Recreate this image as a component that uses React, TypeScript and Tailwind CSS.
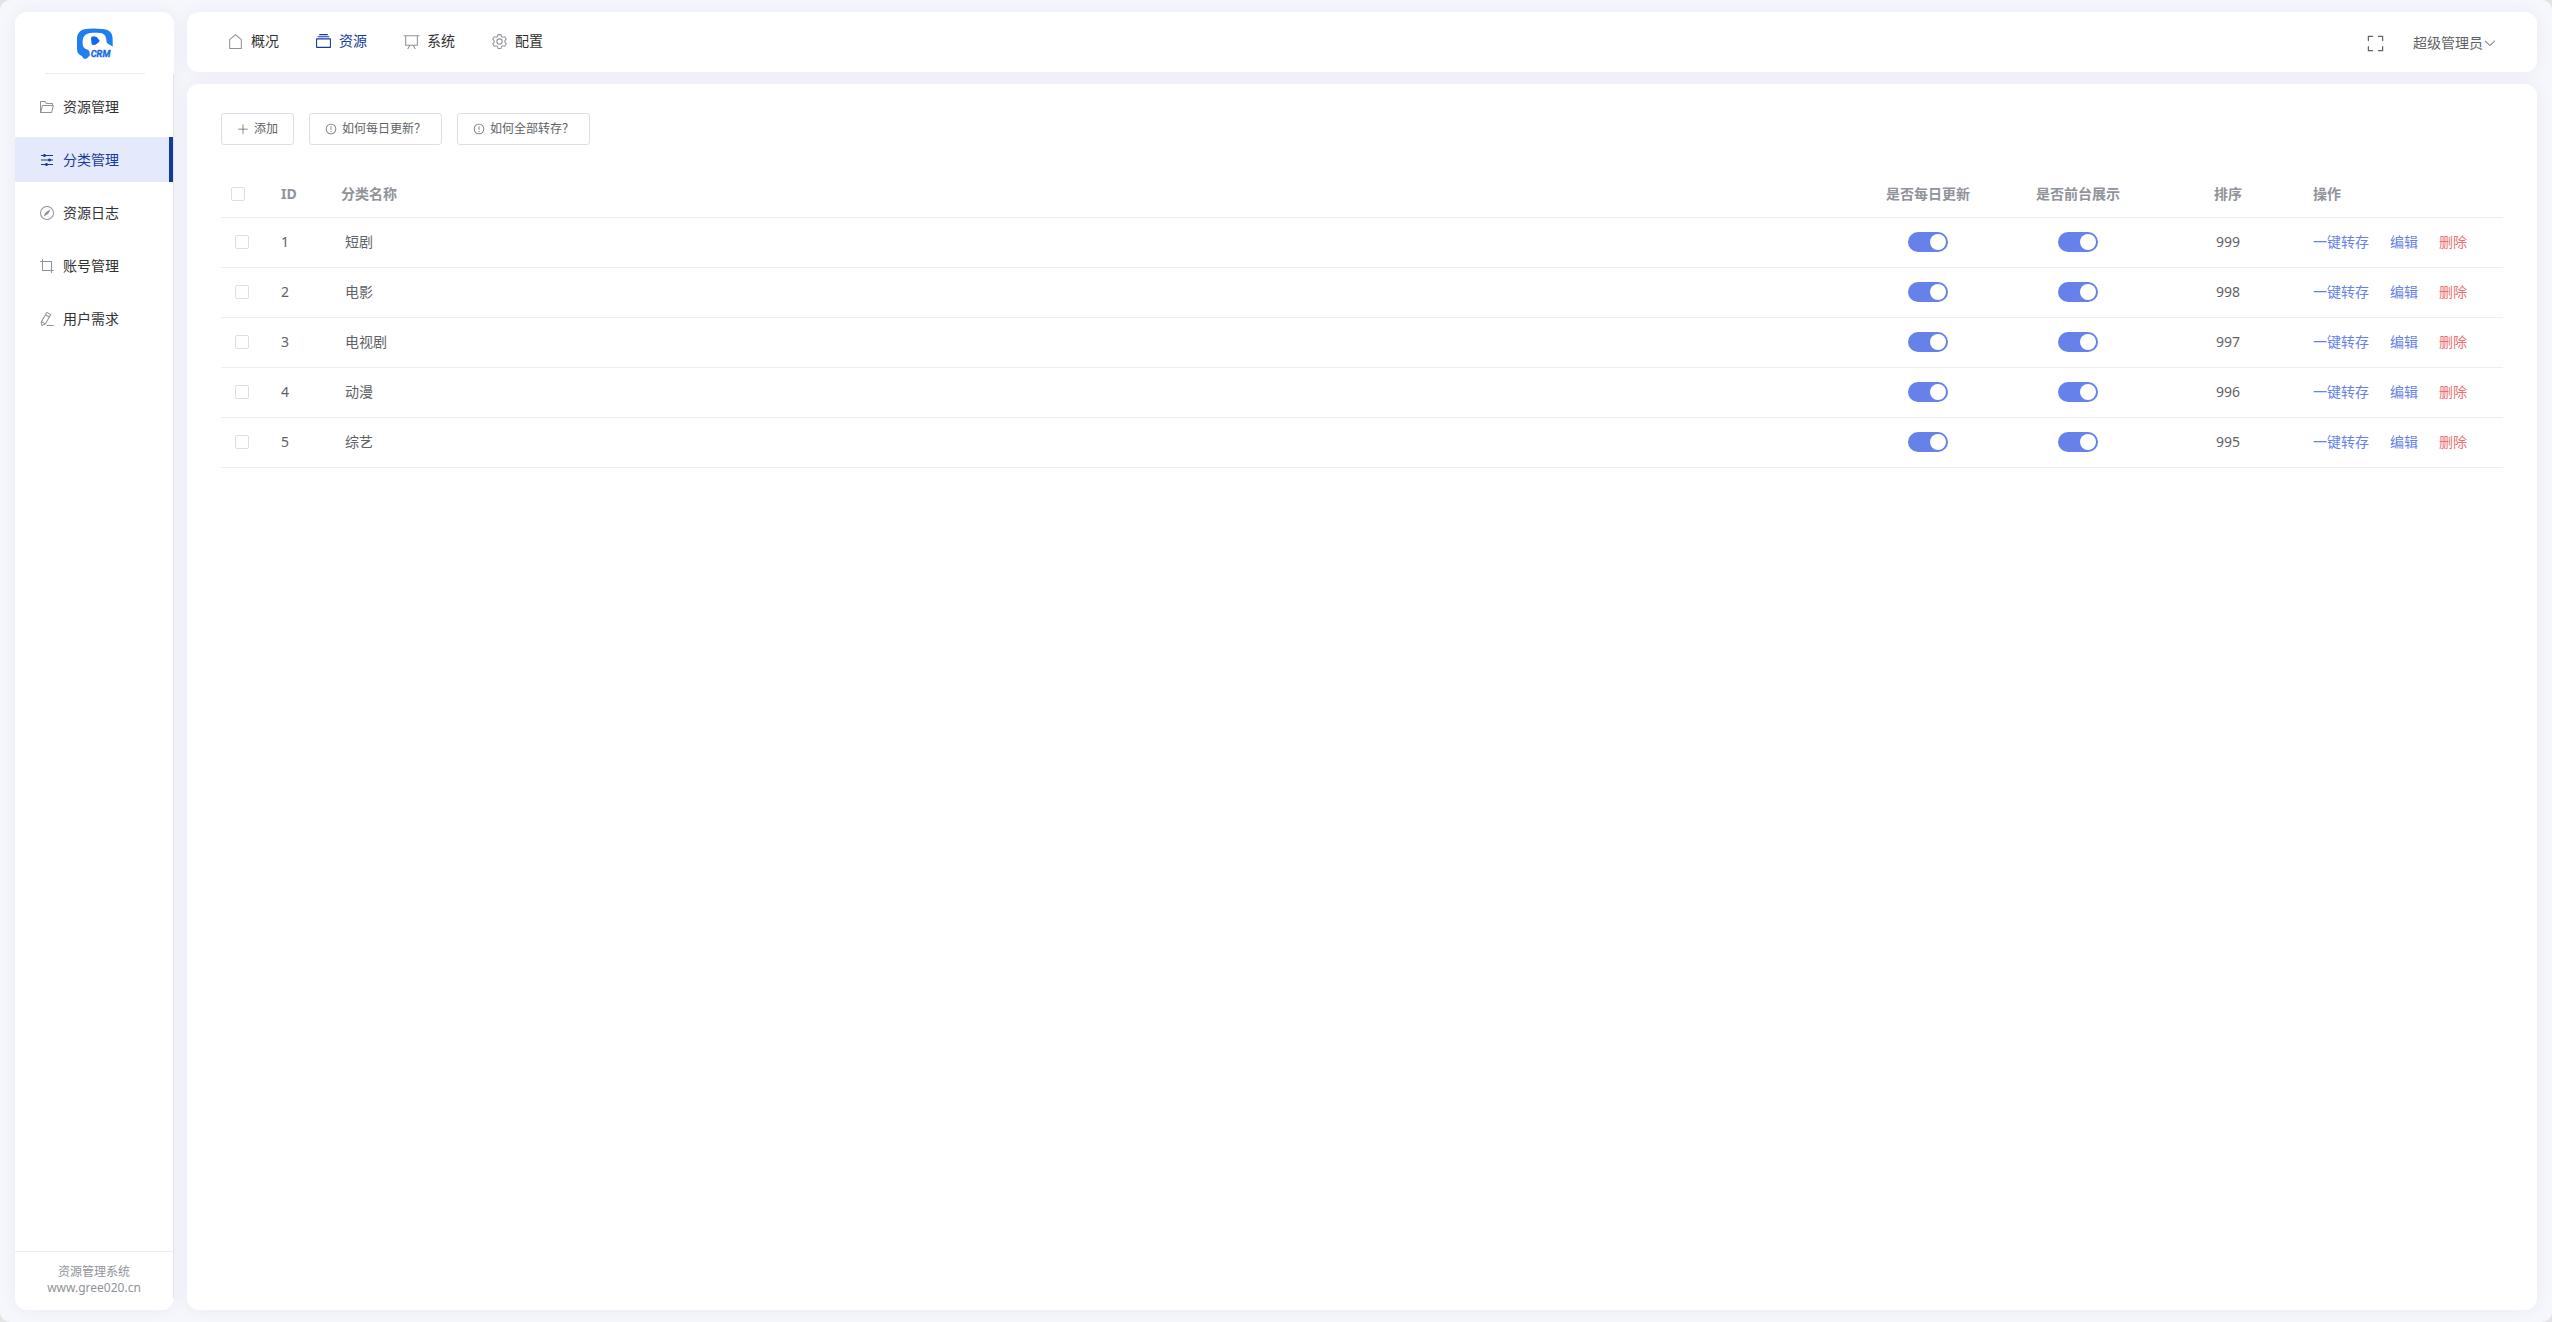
import React, { useState } from 'react';
import clsx from 'clsx';

// 图标路径，画布统一为 1024
const icons = {
  house:
    'M192 413.952V896h640V413.952L512 147.328 192 413.952zM139.52 374.4l352-293.312a32 32 0 0 1 40.96 0l352 293.312A32 32 0 0 1 896 398.976V928a32 32 0 0 1-32 32H160a32 32 0 0 1-32-32V398.976a32 32 0 0 1 11.52-24.576z',
  files:
    'M128 384v448h768V384H128zm-32-64h832a32 32 0 0 1 32 32v512a32 32 0 0 1-32 32H96a32 32 0 0 1-32-32V352a32 32 0 0 1 32-32zm64-128h704v64H160zm96-128h512v64H256z',
  board:
    'M32 128h960v64H32z M192 192v512h640V192H192zm-64-64h768v608a32 32 0 0 1-32 32H160a32 32 0 0 1-32-32V128z M322.176 960H248.32l144.64-250.56 55.424 32L322.176 960zm453.888 0h-73.856L576 741.44l55.424-32L776.064 960z',
  setting:
    'M600.704 64a32 32 0 0 1 30.464 22.208l35.2 109.376c14.784 7.232 28.928 15.36 42.432 24.512l112.384-24.192a32 32 0 0 1 34.432 15.36L944.32 364.8a32 32 0 0 1-4.032 37.504l-77.12 85.12a357.12 357.12 0 0 1 0 49.024l77.12 85.248a32 32 0 0 1 4.032 37.504l-88.704 153.6a32 32 0 0 1-34.432 15.296L708.8 803.904c-13.44 9.088-27.648 17.28-42.368 24.512l-35.264 109.376A32 32 0 0 1 600.704 960H423.296a32 32 0 0 1-30.464-22.208L357.696 828.48a351.616 351.616 0 0 1-42.56-24.64l-112.32 24.256a32 32 0 0 1-34.432-15.36L79.68 659.2a32 32 0 0 1 4.032-37.504l77.12-85.248a357.12 357.12 0 0 1 0-48.896l-77.12-85.248A32 32 0 0 1 79.68 364.8l88.704-153.6a32 32 0 0 1 34.432-15.296l112.32 24.256c13.568-9.152 27.776-17.408 42.56-24.64l35.2-109.312A32 32 0 0 1 423.232 64H600.64zm-23.424 64H446.72l-36.352 113.088-24.512 11.968a294.113 294.113 0 0 0-34.816 20.096l-22.656 15.36-116.224-25.088-65.28 113.152 79.68 88.192-1.92 27.136a293.12 293.12 0 0 0 0 40.192l1.92 27.136-79.808 88.192 65.344 113.152 116.224-25.024 22.656 15.296a294.113 294.113 0 0 0 34.816 20.096l24.512 11.968L446.72 896h130.688l36.48-113.152 24.448-11.904a288.282 288.282 0 0 0 34.752-20.096l22.592-15.296 116.288 25.024 65.28-113.152-79.744-88.192 1.92-27.136a293.12 293.12 0 0 0 0-40.256l-1.92-27.136 79.808-88.128-65.344-113.152-116.288 24.96-22.592-15.232a287.616 287.616 0 0 0-34.752-20.096l-24.448-11.904L577.344 128zM512 320a192 192 0 1 1 0 384 192 192 0 0 1 0-384zm0 64a128 128 0 1 0 0 256 128 128 0 0 0 0-256z',
  folder:
    'M878.08 448H241.92l-96 384h636.16l96-384zM832 384v-64H485.76L357.504 192H128v448l57.92-231.744A32 32 0 0 1 216.96 384H832zm-24.96 512H96a32 32 0 0 1-32-32V160a32 32 0 0 1 32-32h287.872l128.384 128H864a32 32 0 0 1 32 32v96h23.04a32 32 0 0 1 31.04 39.744l-112 448A32 32 0 0 1 807.04 896z',
  operation:
    'M389.44 768a96.064 96.064 0 0 1 181.12 0H896v64H570.56a96.064 96.064 0 0 1-181.12 0H128v-64h261.44zm192-288a96.064 96.064 0 0 1 181.12 0H896v64H762.56a96.064 96.064 0 0 1-181.12 0H128v-64h453.44zm-320-288a96.064 96.064 0 0 1 181.12 0H896v64H442.56a96.064 96.064 0 0 1-181.12 0H128v-64h133.44z',
  compass:
    'M512 896a384 384 0 1 0 0-768 384 384 0 0 0 0 768zm0 64a448 448 0 1 1 0-896 448 448 0 0 1 0 896z M725.888 315.008C676.48 428.672 624 513.28 568.576 568.64c-55.424 55.424-139.968 107.904-253.568 157.312a12.8 12.8 0 0 1-16.896-16.832c49.536-113.728 102.016-198.272 157.312-253.632 55.36-55.296 139.904-107.776 253.632-157.312a12.8 12.8 0 0 1 16.832 16.832z',
  crop:
    'M256 768h672a32 32 0 1 1 0 64H224a32 32 0 0 1-32-32V96a32 32 0 0 1 64 0v672z M832 224v704a32 32 0 1 1-64 0V256H96a32 32 0 0 1 0-64h704a32 32 0 0 1 32 32z',
  editPen:
    'm199.04 672.64 193.984 112 224-387.968-193.92-112-224 388.032zm-23.872 60.16 32.896 148.288 144.896-45.696L175.168 732.8zM455.04 229.248l193.92 112 56.704-98.112-193.984-112-56.64 98.112zM104.32 708.8l384-665.024 304.768 175.936L409.152 884.8h.064l-248.448 78.336L104.32 708.8zm384 254.272v-64h448v64h-448z',
  fullScreen:
    'm160 96.064 192 .192a32 32 0 0 1 0 64l-192-.192V352a32 32 0 0 1-64 0V96h64v.064zm0 831.872V928H96V672a32 32 0 1 1 64 0v191.936l192-.192a32 32 0 1 1 0 64l-192 .192zM864 96.064V96h64v256a32 32 0 1 1-64 0V160.064l-192 .192a32 32 0 1 1 0-64l192-.192zm0 831.872-192-.192a32 32 0 0 1 0-64l192 .192V672a32 32 0 1 1 64 0v256h-64v-.064z',
  arrowDown:
    'M831.872 340.864 512 652.672 192.128 340.864a30.592 30.592 0 0 0-42.752 0 29.12 29.12 0 0 0 0 41.6L489.664 714.24a32 32 0 0 0 44.672 0l340.288-331.712a29.12 29.12 0 0 0 0-41.728 30.592 30.592 0 0 0-42.752 0z',
  plus: 'M480 480V128a32 32 0 0 1 64 0v352h352a32 32 0 1 1 0 64H544v352a32 32 0 1 1-64 0V544H128a32 32 0 0 1 0-64h352z',
  warning:
    'M512 64a448 448 0 1 1 0 896 448 448 0 0 1 0-896zm0 832a384 384 0 0 0 0-768 384 384 0 0 0 0 768zm48-176a48 48 0 1 1-96 0 48 48 0 0 1 96 0zm-48-464a32 32 0 0 1 32 32v288a32 32 0 0 1-64 0V288a32 32 0 0 1 32-32z',
};

type IconName = keyof typeof icons;

interface Category {
  id: number;
  name: string;
  daily: boolean;
  show: boolean;
  sort: number;
}

const navItems: { label: string; icon: IconName }[] = [
  { label: '概况', icon: 'house' },
  { label: '资源', icon: 'files' },
  { label: '系统', icon: 'board' },
  { label: '配置', icon: 'setting' },
];

const menuItems: { label: string; icon: IconName }[] = [
  { label: '资源管理', icon: 'folder' },
  { label: '分类管理', icon: 'operation' },
  { label: '资源日志', icon: 'compass' },
  { label: '账号管理', icon: 'crop' },
  { label: '用户需求', icon: 'editPen' },
];

const toolbar: { label: string; icon: IconName }[] = [
  { label: '添加', icon: 'plus' },
  { label: '如何每日更新？', icon: 'warning' },
  { label: '如何全部转存？', icon: 'warning' },
];

const initialRows: Category[] = [
  { id: 1, name: '短剧', daily: true, show: true, sort: 999 },
  { id: 2, name: '电影', daily: true, show: true, sort: 998 },
  { id: 3, name: '电视剧', daily: true, show: true, sort: 997 },
  { id: 4, name: '动漫', daily: true, show: true, sort: 996 },
  { id: 5, name: '综艺', daily: true, show: true, sort: 995 },
];

const Icon: React.FC<{ name: IconName; className?: string }> = ({ name, className }) => (
  <svg viewBox="0 0 1024 1024" fill="currentColor" aria-hidden="true" className={clsx('shrink-0', className)}>
    <path d={icons[name]} />
  </svg>
);

const Logo: React.FC = () => (
  <svg viewBox="0 0 114 96" className="h-8 w-[38px]" role="img" aria-label="CRM">
    <path
      fill="#1f7fee"
      d="M28 93C20 93 22 85 13 82 6 78 3 72 3 61V34C3 12 15 3 37 2Q57 0 78 3C99 4 110 13 110 34V64L98 74H48L40 84Q34 92 28 93Z"
    />
    <path
      fill="#fff"
      d="M50 14H66C84 14 91 24 91 37 91 45 96 49 102 51L112 57V96H42V84L40 70C38 64 30 65 25 60 20 55 19 48 20 38 21 22 32 14 50 14Z"
    />
    <path fill="#1269e6" d="M45 32Q45 25 53 25L62 27 70 37Q71 40 67 44L58 50Q51 53 47 49Z" />
    <text
      x="44"
      y="86"
      fontFamily="Roboto, sans-serif"
      fontSize="28"
      fontWeight="700"
      fontStyle="italic"
      fill="#1269e6"
      stroke="#1269e6"
      strokeWidth="1"
    >
      CRM
    </text>
  </svg>
);

const CheckBox: React.FC<{ label: string; checked: boolean; onChange: () => void }> = ({
  label,
  checked,
  onChange,
}) => (
  <input
    type="checkbox"
    aria-label={label}
    checked={checked}
    onChange={onChange}
    className="block size-3.5 appearance-none rounded-xs border border-[#dcdfe6] bg-white checked:border-[#6681ea] checked:bg-[#6681ea]"
  />
);

const Switch: React.FC<{ label: string; checked: boolean; onChange: () => void }> = ({
  label,
  checked,
  onChange,
}) => (
  <input
    type="checkbox"
    role="switch"
    aria-label={label}
    checked={checked}
    onChange={onChange}
    className="mx-auto flex h-5 w-10 cursor-pointer appearance-none items-center rounded-full bg-[#dcdfe6] px-0.5 before:size-4 before:rounded-full before:bg-white checked:justify-end checked:bg-[#6681ea]"
  />
);

const App: React.FC = () => {
  const [rows, setRows] = useState<Category[]>(initialRows);
  const [selected, setSelected] = useState<number[]>([]);

  const toggleRow = (id: number) =>
    setSelected((prev) => (prev.includes(id) ? prev.filter((v) => v !== id) : [...prev, id]));

  const toggleAll = () => setSelected(selected.length === rows.length ? [] : rows.map((r) => r.id));

  const toggleField = (id: number, field: 'daily' | 'show') =>
    setRows((prev) => prev.map((r) => (r.id === id ? { ...r, [field]: !r[field] } : r)));

  return (
    <div className="min-h-screen bg-[#e4e3e3] font-['Noto_Sans','Noto_Sans_CJK_SC',sans-serif] text-sm leading-5 text-[#606266]">
      <div className="flex min-h-screen gap-[13px] rounded-[10px] bg-[#f6f7fc] px-[15px] py-3">
        {/* 侧边栏 */}
        <aside className="flex w-[159px] shrink-0 flex-col rounded-xl bg-white shadow-[0_0_16px_rgba(50,50,120,0.06)]">
          <div className="flex flex-col items-center pt-4">
            <Logo />
            <div className="mt-[13px] h-px w-[100px] bg-[#ebecef]" />
          </div>
          <nav className="mb-3 flex flex-1 flex-col border-r border-[#e4e5ea] pt-[10px]">
            <ul className="flex flex-1 flex-col gap-2">
              {menuItems.map((item, i) => (
                <li key={item.label}>
                  <a
                    href="#"
                    className={clsx(
                      'flex h-[45px] items-center gap-2 border-r-4 pl-6',
                      i === 1 ? 'border-[#143a9c] bg-[#e4e9fb] text-[#143a9c]' : 'border-transparent text-[#303133]'
                    )}
                  >
                    <Icon name={item.icon} className={clsx('size-4', i !== 1 && 'text-[#909399]')} />
                    {item.label}
                  </a>
                </li>
              ))}
            </ul>
            <div className="border-t border-[#ebecef] pt-3 pb-0.5 text-center text-xs leading-4 text-[#909399]">
              <p>资源管理系统</p>
              <p>www.gree020.cn</p>
            </div>
          </nav>
        </aside>

        <div className="flex min-w-0 flex-1 flex-col gap-3">
          {/* 顶部导航 */}
          <header className="flex h-[60px] items-center justify-between rounded-xl bg-white px-10 shadow-[0_0_16px_rgba(50,50,120,0.06)]">
            <nav className="flex gap-9 pb-0.5">
              {navItems.map((item, i) => (
                <a
                  key={item.label}
                  href="#"
                  className={clsx('flex items-center gap-[7px]', i === 1 ? 'text-[#143a9c]' : 'text-[#303133]')}
                >
                  <Icon name={item.icon} className={clsx('size-[17px]', i !== 1 && 'text-[#909399]')} />
                  {item.label}
                </a>
              ))}
            </nav>
            <div className="flex items-center gap-7 pt-0.5">
              <button type="button" aria-label="全屏">
                <Icon name="fullScreen" className="size-[19px]" />
              </button>
              <button type="button" className="flex items-center">
                超级管理员
                <Icon name="arrowDown" className="size-3.5" />
              </button>
            </div>
          </header>

          {/* 内容区 */}
          <main className="flex-1 rounded-xl bg-white px-[34px] pt-[29px] shadow-[0_0_16px_rgba(50,50,120,0.06)]">
            <div className="flex gap-[15px]">
              {toolbar.map((btn) => (
                <button
                  key={btn.label}
                  type="button"
                  className="flex h-8 items-center gap-[5px] rounded-[3px] border border-[#dcdfe6] px-[15px] text-xs"
                >
                  <Icon name={btn.icon} className="size-3" />
                  {btn.label}
                </button>
              ))}
            </div>

            <table className="mt-[26px] w-full table-fixed border-collapse">
              <colgroup>
                <col className="w-[50px]" />
                <col className="w-[60px]" />
                <col />
                <col className="w-[150px]" />
                <col className="w-[150px]" />
                <col className="w-[150px]" />
                <col className="w-[200px]" />
              </colgroup>
              <thead>
                <tr className="h-[46px] border-b border-[#ebeef5] text-left text-[#909399]">
                  <th className="px-[10px]">
                    <CheckBox label="全选" checked={selected.length === rows.length} onChange={toggleAll} />
                  </th>
                  <th className="px-[10px]">ID</th>
                  <th className="px-[10px]">分类名称</th>
                  <th className="text-center">是否每日更新</th>
                  <th className="text-center">是否前台展示</th>
                  <th className="text-center">排序</th>
                  <th className="px-[10px]">操作</th>
                </tr>
              </thead>
              <tbody>
                {rows.map((row) => (
                  <tr key={row.id} className="h-[50px] border-b border-[#ebeef5]">
                    <td className="pl-[14px]">
                      <CheckBox
                        label={`选择${row.name}`}
                        checked={selected.includes(row.id)}
                        onChange={() => toggleRow(row.id)}
                      />
                    </td>
                    <td className="px-[10px]">{row.id}</td>
                    <td className="px-[14px]">{row.name}</td>
                    <td>
                      <Switch
                        label={`${row.name}每日更新`}
                        checked={row.daily}
                        onChange={() => toggleField(row.id, 'daily')}
                      />
                    </td>
                    <td>
                      <Switch
                        label={`${row.name}前台展示`}
                        checked={row.show}
                        onChange={() => toggleField(row.id, 'show')}
                      />
                    </td>
                    <td className="text-center">{row.sort}</td>
                    <td className="px-[10px]">
                      <div className="flex gap-[21px] text-[#6681ea]">
                        <button type="button">一键转存</button>
                        <button type="button">编辑</button>
                        <button type="button" className="text-[#ee6f6f]">
                          删除
                        </button>
                      </div>
                    </td>
                  </tr>
                ))}
              </tbody>
            </table>
          </main>
        </div>
      </div>
    </div>
  );
};

export default App;
